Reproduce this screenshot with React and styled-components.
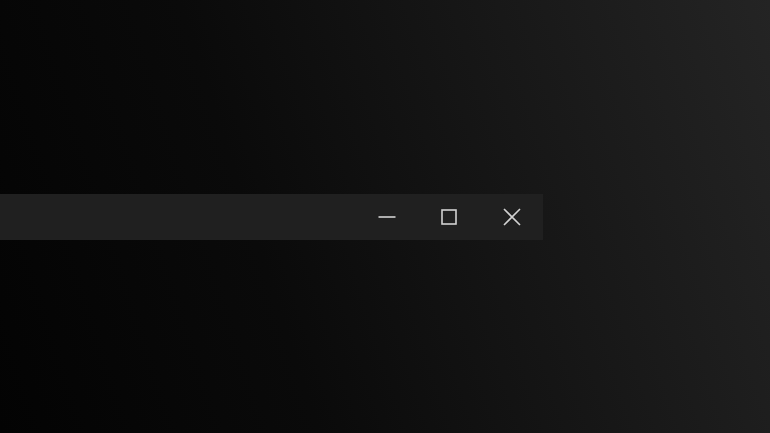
import React from 'react'
import styled, { createGlobalStyle } from 'styled-components'

const GlobalStyle = createGlobalStyle`
  html, body {
    margin: 0;
    padding: 0;
    height: 100%;
  }
  body {
    background: linear-gradient(72deg, #030303 0%, #0a0a0a 35%, #161616 65%, #242424 100%);
    font-family: "Segoe UI", "Noto Sans", sans-serif;
    overflow: hidden;
  }
  #root {
    height: 100%;
  }
`

const Screen = styled.div`
  width: 770px;
  height: 433px;
  display: flex;
  flex-direction: column;
  padding-top: 194px;
  box-sizing: border-box;
`

const TitleBar = styled.div`
  width: 543px;
  height: 46px;
  background: #202020;
  display: flex;
  justify-content: flex-end;
`

const CaptionButton = styled.button`
  width: 62.6px;
  height: 100%;
  border: none;
  background: transparent;
  padding: 0;
  display: flex;
  align-items: center;
  justify-content: center;
  color: #d2d2d2;
  cursor: default;
  &:hover {
    background: ${(p) => (p.$danger ? '#c42b1c' : 'rgba(255,255,255,0.08)')};
  }
`

const App = () => {
  return (
    <>
      <GlobalStyle />
      <Screen>
        <TitleBar>
          <CaptionButton aria-label="Minimize">
            <svg width="18" height="18" viewBox="0 0 18 18">
              <path d="M0.5 9h17" stroke="currentColor" strokeWidth="1.6" fill="none" />
            </svg>
          </CaptionButton>
          <CaptionButton aria-label="Maximize">
            <svg width="16" height="16" viewBox="0 0 16 16">
              <rect x="1" y="1" width="14" height="14" stroke="currentColor" strokeWidth="1.6" fill="none" />
            </svg>
          </CaptionButton>
          <CaptionButton aria-label="Close" $danger>
            <svg width="18" height="18" viewBox="0 0 18 18">
              <path d="M1 1L17 17M17 1L1 17" stroke="currentColor" strokeWidth="1.6" fill="none" />
            </svg>
          </CaptionButton>
        </TitleBar>
      </Screen>
    </>
  )
}

export default App
